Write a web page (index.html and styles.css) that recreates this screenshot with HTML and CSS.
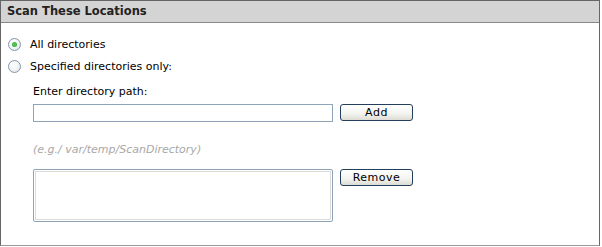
FILE: index.html
```html
<!DOCTYPE html>
<html lang="en">
<head>
    <meta charset="UTF-8" />
    <title>Scan These Locations</title>
    <link rel="stylesheet" href="styles.css">
</head>
<body>
<div class="panel">
    <div class="panel-title">Scan These Locations</div>

    <div class="panel-body">
        <label class="option">
            <input type="radio" name="scope" checked>
            <span>All directories</span>
        </label>
        <label class="option">
            <input type="radio" name="scope">
            <span>Specified directories only:</span>
        </label>

        <div class="dirs">
            <div class="dirs-label">Enter directory path:</div>
            <div class="dirs-row">
                <input type="text" class="path-input">
                <button class="btn">Add</button>
            </div>
            <div class="hint">(e.g./ var/temp/ScanDirectory)</div>
            <div class="dirs-row">
                <select class="path-list" multiple></select>
                <button class="btn">Remove</button>
            </div>
        </div>
    </div>
</div>
</body>
</html>
```

FILE: styles.css
```css
body {
    margin: 0;
    font-family: "DejaVu Sans", Verdana, sans-serif;
    font-size: 11px;
    color: #000;
    background: #fff;
}

.panel {
    width: 598px;
    height: 244px;
    border: 1px solid #666;
    border-bottom-color: #999;
}

.panel-title {
    height: 21px;
    line-height: 21px;
    padding-left: 6px;
    background-color: #d4d4d4;
    border-bottom: 1px solid #888;
    font-weight: bold;
    font-size: 11.5px;
    color: #222;
}

.panel-body {
    padding: 12px 0 0 7px;
}

.option {
    display: flex;
    align-items: center;
    height: 18px;
    margin-bottom: 4px;
}

.option span {
    margin-left: 9px;
}

.option input {
    appearance: none;
    margin: 0;
    width: 13px;
    height: 13px;
    border: 1px solid #8496a8;
    border-radius: 50%;
    background: radial-gradient(circle at 40% 35%, #fff 0%, #f2f4f6 50%, #d8dde2 100%);
    display: grid;
    place-items: center;
}

.option input:checked::after {
    content: "";
    width: 5px;
    height: 5px;
    border-radius: 50%;
    background: radial-gradient(circle, #5ad15a 0%, #2f9d2f 100%);
}

.dirs {
    padding: 5px 0 0 25px;
}

.dirs-label {
    line-height: 16px;
    margin-bottom: 4px;
}

.dirs-row {
    display: flex;
    align-items: flex-start;
    gap: 7px;
}

.path-input {
    width: 300px;
    height: 18px;
    margin: 0;
    box-sizing: border-box;
    border: 1px solid #8ea4b8;
}

.path-list {
    width: 300px;
    height: 53px;
    margin: 0;
    box-sizing: border-box;
    border: 1px solid #8ea4b8;
    outline: 1px solid #dcdcdc;
    outline-offset: -3px;
}

.btn {
    width: 73px;
    height: 17px;
    padding: 0;
    font-family: "DejaVu Sans", Verdana, sans-serif;
    font-size: 11px;
    letter-spacing: 0.5px;
    color: #000;
    border: 1px solid #233f5e;
    border-radius: 3px;
    background: linear-gradient(#ffffff, #f3f3ef 60%, #dcdcd4);
}

.hint {
    margin: 20px 0 11px;
    line-height: 16px;
    font-style: italic;
    color: #a8a8a8;
}
```
